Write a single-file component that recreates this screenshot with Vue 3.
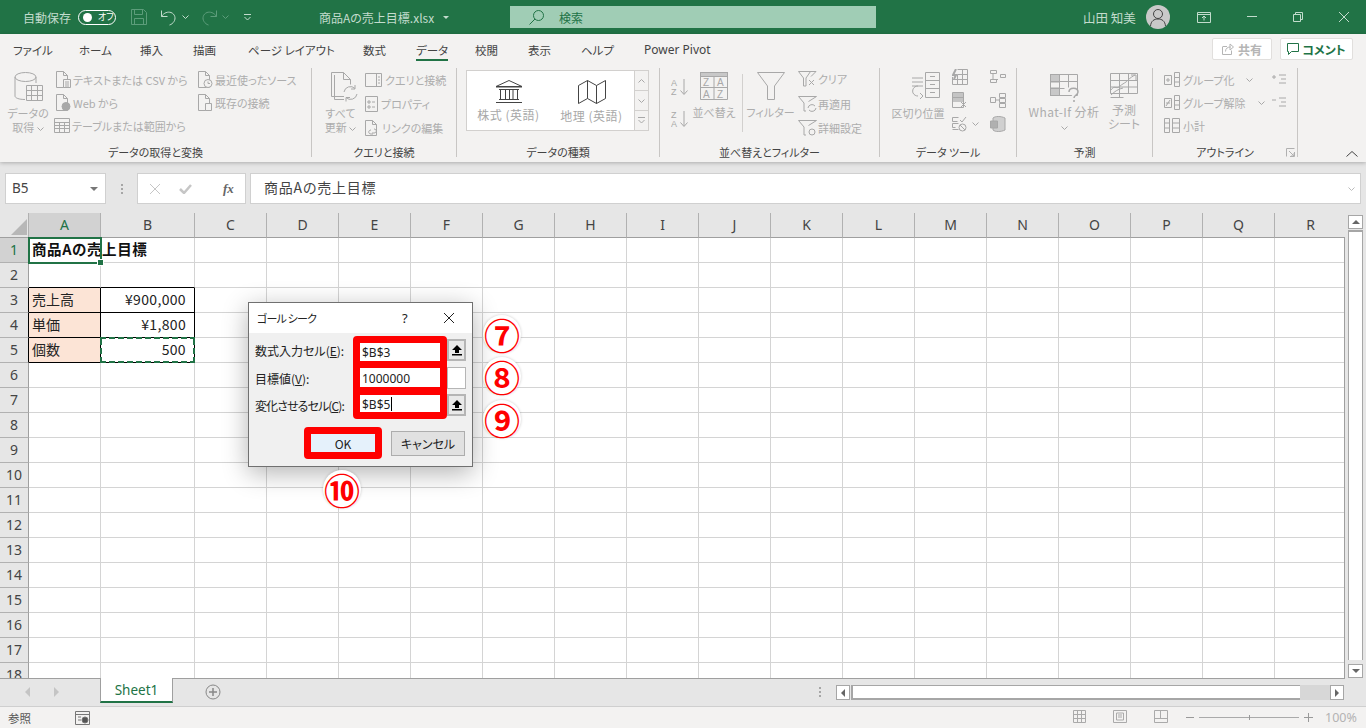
<script setup>
import { h } from 'vue'

const icons = {
  save: [16, 16, '<path d="M.5.5h12l3 3v12H.5zM3.500.5v5h8v-5M3.500 15.500v-6h9v6"/>'],
  undo: [17, 17, '<path d="M1.500 1.500v6h6M1.500 7.500C4 3.500 8 2.500 11 3.500c4 1.500 5 6 3 9-1 1.500-2.500 3-4.500 3.500"/>'],
  redo: [17, 17, '<path d="M15.500 1.500v6h-6M15.500 7.500C13 3.500 9 2.500 6 3.500c-4 1.500-5 6-3 9 1 1.500 2.500 3 4.500 3.500"/>'],
  chev: [7, 4, '<path d="M.5.5l3 3 3-3"/>'],
  qat: [7, 7, '<path d="M0 .5h7M.5 3l3 3 3-3"/>'],
  search: [15, 15, '<circle cx="9.500" cy="5.500" r="5"/><path d="M6 9l-5.500 5.500"/>'],
  user: [24, 24, '<circle cx="12" cy="9" r="4.500"/><path d="M4.500 21c.5-5 3.500-7 7.500-7s7 2 7.500 7"/>'],
  present: [14, 11, '<path d="M.5.5h13v10H.5zM.5 2.500h13M7 8.500v-4M5 6l2-2 2 2"/>'],
  min: [10, 2, '<path d="M0 .5h10"/>'],
  restore: [10, 10, '<path d="M.5 2.500h7v7h-7zM2.500 2.500v-2h7v7h-2"/>'],
  close: [10, 10, '<path d="M0 0l10 10M10 0L0 10"/>'],
  share: [12, 12, '<path d="M1 3.500h4M.5 3.500v8h9v-4M3.500 8.500c0-3 2-4.500 5-4.500M8 1l3.500 3L8 7z"/>'],
  comment: [12, 12, '<path d="M.5.5h11v8H4.500l-3 3v-3h-1z"/>'],
  db: [29, 29, '<ellipse cx="11.500" cy="5" rx="10.500" ry="4.500"/><path d="M1 5v19c0 2 4 3.500 10 3.500M22 5v6"/><path d="M12.500 13.500h16v15h-16zM12.500 18.500h16M12.500 23.500h16M17.500 13.500v15M23.500 13.500v15"/>'],
  docl: [15, 17, '<path d="M.5.5h7l4 4v12h-11zM7.500.5v4h4"/><path d="M7.500 8.500h7v8h-7zM9 11h4M9 13h4M9 15h4" fill="#f3f2f1"/>'],
  docw: [15, 17, '<path d="M.5.5h7l4 4v12h-11zM7.500.5v4h4"/><circle cx="10" cy="12.500" r="4" fill="#a8a8a8"/>'],
  table: [16, 15, '<path d="M.5.5h15v14H.5zM.5 4.500h15M.5 7.500h15M.5 10.500h15M5.500 4.500v10M10.500 4.500v10"/>'],
  docc: [15, 17, '<path d="M.5.5h7l4 4v12h-11zM7.500.5v4h4"/><circle cx="10" cy="12.500" r="4" fill="#f3f2f1"/><path d="M10 10.500v2h2"/>'],
  docb: [15, 17, '<path d="M.5.5h7l4 4v12h-11zM7.500.5v4h4"/><path d="M7.500 9.500h6v7h-6z" fill="#f3f2f1"/>'],
  refresh: [28, 30, '<path d="M14 24.500H1.500V.5h12l7 7v5M13.500.5v7h7"/><path d="M4.500 3v24.500H14"/><path d="M14 20a6.500 6.500 0 0 1 11-3.500M27 22a6.500 6.500 0 0 1-11 3.500M25 13v4h-4M16 29.500v-4h4"/>'],
  qpanel: [17, 14, '<path d="M.5.5h16v13H.5zM11.500.5v13M13 4h2M13 7h2M13 10h2"/>'],
  prop: [13, 16, '<path d="M.5.5h12v15H.5zM3 5h2v2H3zM7 6h3M3 10h2v2H3zM7 11h3"/>'],
  link: [14, 16, '<path d="M.5.5h7l4 4v11h-11zM7.500.500v4h4"/><path d="M6 10c-3 0-3 4 0 4h2M9 9c3 0 3 4 0 4H7"/>'],
  bank: [28, 23, '<path d="M14 .5L27 6.500H1zM1 7h26M3 22.500h22M1 22.500h26M4 9.500h20M4 19.500h20M5.500 9.500v10M10.500 9.500v10M14.500 9.500v10M18 9.500v10M22.500 9.500v10"/>'],
  map: [28, 24, '<path d="M.5 5.500l9-5 9 5 9-5v18l-9 5-9-5-9 5zM9.500.5v18M18.500 5.500v18"/>'],
  az: [17, 18, '<text x="0" y="8" font-size="9" fill="#a8a8a8" stroke="none" font-family="Liberation Sans">A</text><text x="0" y="17" font-size="9" fill="#a8a8a8" stroke="none" font-family="Liberation Sans">Z</text><path d="M13 1v15M9.500 12.500l3.500 4 3.500-4"/>'],
  za: [17, 18, '<text x="0" y="8" font-size="9" fill="#a8a8a8" stroke="none" font-family="Liberation Sans">Z</text><text x="0" y="17" font-size="9" fill="#a8a8a8" stroke="none" font-family="Liberation Sans">A</text><path d="M13 1v15M9.500 12.500l3.500 4 3.500-4"/>'],
  sort: [28, 28, '<rect x=".5" y=".5" width="27" height="4" fill="#c8c8c8"/><path d="M.5.5h27v27H.5zM14 4.500v23M.5 15.500h27"/><text x="3" y="14" font-size="10" fill="#a8a8a8" stroke="none" font-family="Liberation Sans">Z</text><text x="17" y="14" font-size="10" fill="#a8a8a8" stroke="none" font-family="Liberation Sans">A</text><text x="3" y="26" font-size="10" fill="#a8a8a8" stroke="none" font-family="Liberation Sans">A</text><text x="17" y="26" font-size="10" fill="#a8a8a8" stroke="none" font-family="Liberation Sans">Z</text>'],
  filter: [28, 28, '<path d="M.5.5h27L17.500 14v13.500h-7V14z"/>'],
  fclr: [20, 16, '<path d="M.5.5h12L8 7v8H5.500V7z"/><path d="M11 9l5 5M16 9l-5 5M12 .5h6l-5 5"/>'],
  fre: [20, 16, '<path d="M.5.5h18l-8 5M.5.5L6 7v8h2"/><path d="M10 12a4 4 0 0 1 7-2M18 12a4 4 0 0 1-7 2"/>'],
  fadv: [20, 16, '<path d="M.5.5h18l-8 5M.5.5L6 7v8h2"/><circle cx="14" cy="12" r="3"/>'],
  split: [29, 29, '<path d="M14.500 .5h14v25h-14zM14.500 8.500h14M14.500 16.500h14M19 4.500h5M19 12.500h5M19 20.500h5"/><path d="M1 6h11M1 10h11M1 14h11M7 14c-5 0-6 5-5 7s3 3 5 3M9 21l3 3-3 3"/>'],
  flash: [16, 16, '<path d="M5.500.5h10v15H.5V8M10.500.5v15M5.500 5.500h10M.5 10.500h15M5.500 5.500v10"/><path d="M4 0L1 6h3L2 10" stroke-width="2"/>'],
  dup: [15, 16, '<path d="M.5.5h11v15H.5zM.5 5.500h11"/><rect x="1" y="1" width="10" height="4" fill="#c4c4c4" stroke="none"/><rect x="1" y="6" width="10" height="4" fill="#c4c4c4" stroke="none"/><path d="M9 10l5 5M14 10l-5 5" fill="none"/>'],
  valid: [15, 16, '<path d="M.5 1.500h6M.5 7.500h6M.5 13.500h6M.5 1.500v4h5M.5 7.500v4h3"/><path d="M8 4l2 2 4-5"/><circle cx="10.500" cy="11.500" r="3.500"/><path d="M8 9l5 5"/>'],
  cons: [16, 13, '<path d="M.5.5h6v3h-6zM.5 9.500h6v3h-6zM3 3.500v6h5M10.500 4.500h5v3h-5z"/>'],
  rel: [16, 15, '<path d="M.5 4.500h5v5h-5zM9.500.5h6v4h-6zM9.500 5.500h6v4h-6zM9.500 10.500h6v4h-6zM5.500 7h4"/>'],
  pivot: [16, 16, '<path d="M3 2c2-2 8-2 12 0v12c-4 2-10 2-12 0z" fill="#d0d0d0"/><path d="M.5 5h7v7h-7z" fill="#b0b0b0"/>'],
  whatif: [30, 28, '<rect x=".5" y=".5" width="9" height="7.500" fill="#c8c8c8"/><rect x=".5" y="14" width="9" height="7.500" fill="#c8c8c8"/><path d="M.5.5h27v21H.5zM.5 7.500h27M.5 14.500h14M9.500.5v21M18.500.5v13"/><path d="M19 18c0-5 9-5 9 0 0 3-4 3-4 6M24 26v2" stroke-width="1.500" fill="#f3f2f1"/>'],
  fore: [28, 25, '<path d="M.5.5h27v20H.5zM.5 7.500h27M.5 14h27M9.500.5v24M18.500.5v20M.5 24.500h13"/><path d="M1 17c3-5 5-1 8-3 4-4 7-4 9-7 2-2 5-4 7-5M21 2h5v5"/><path d="M1 22c3-3 7-6 12-7"/>'],
  grp: [16, 15, '<path d="M10.500.5h5v14h-5zM10.500 5.500h5M10.500 10h5M.5 3.500h7v9h-7zM2 8h4M4 6v4"/>'],
  ungrp: [16, 15, '<path d="M10.500.5h5v14h-5zM10.500 5.500h5M10.500 10h5M.5 3.500h7v9h-7zM2 8h4M2 11l4-6"/>'],
  sub: [16, 15, '<path d="M.5.5h5v14h-5zM.5 5h5M.5 10h5M8.500.5h7v14h-7zM8.500 5h7M8.500 10h7"/>'],
  plus: [15, 11, '<path d="M0 3h4M2 1v4M7 1h7M9 5h5M7 9h7"/>'],
  minus: [15, 11, '<path d="M0 3h4M7 1h7M9 5h5M7 9h7"/>'],
  launch: [9, 9, '<path d="M.5 8.500v-8h8M8.500 4v4.500H4M3 3l5 5M8 5v3H5"/>'],
  up: [12, 6, '<path d="M.5 5.500l5.500-5 5.500 5"/>'],
  x: [10, 10, '<path d="M0 0l10 10M10 0L0 10"/>'],
  check: [13, 10, '<path d="M1 5l4 4 7-8" stroke-width="2.500"/>'],
  plusc: [16, 16, '<circle cx="8" cy="8" r="7"/><path d="M8 4v8M4 8h8" stroke-width="1.500"/>'],
  macro: [15, 14, '<path d="M.5.5h14v13H.5zM.5 3.500h14M3 6h3M3 9h3"/><circle cx="10" cy="9" r="3" fill="#555"/>'],
  vnorm: [13, 13, '<path d="M.5.5h12v12H.5zM.5 4.500h12M.5 8.500h12M4.500.5v12M8.500.5v12"/>'],
  vpage: [14, 13, '<path d="M.5.5h13v12H.5zM3.500 3h7v7h-7zM5 5h4M5 7h4"/>'],
  vbrk: [14, 13, '<path d="M.5.5h13v12H.5zM.5 8.500h13M6.500.5v8"/>']
}

const Ic = (props) => {
  const [w, v, body] = icons[props.n]
  return h('svg', {
    class: 'ic', width: w, height: v, viewBox: `0 0 ${w} ${v}`,
    fill: 'none', stroke: 'currentColor', 'stroke-width': 1, innerHTML: body
  })
}
Ic.props = ['n']

const tabs = ['ファイル', 'ホーム', '挿入', '描画', 'ページ レイアウト', '数式', 'データ', '校閲', '表示', 'ヘルプ', 'Power Pivot']
const cols = ['A', 'B', 'C', 'D', 'E', 'F', 'G', 'H', 'I', 'J', 'K', 'L', 'M', 'N', 'O', 'P', 'Q', 'R']
const rows = Array.from({ length: 18 }, (_, i) => i + 1)

const data = {
  '1A': { t: '商品Aの売上目標', c: 'bold sel' },
  '2A': { c: 'bb' }, '2B': { c: 'bb' },
  '3A': { t: '売上高', c: 'fill bb br' }, '3B': { t: '¥900,000', c: 'num bb br' },
  '4A': { t: '単価', c: 'fill bb br' }, '4B': { t: '¥1,800', c: 'num bb br' },
  '5A': { t: '個数', c: 'fill bb br' }, '5B': { t: '500', c: 'num bb br copy' }
}
const cell = (r, c) => data[r + c] || {}
</script>

<template>
  <div class="app">
    <header class="title">
      <span class="as">自動保存</span>
      <span class="toggle"><i></i><b>オフ</b></span>
      <Ic n="save" class="dim q-save" />
      <Ic n="undo" class="lt q-undo" />
      <Ic n="chev" class="lt q-c1" />
      <Ic n="redo" class="dim q-redo" />
      <Ic n="chev" class="dim q-c2" />
      <Ic n="qat" class="lt q-qat" />
      <span class="doc">商品Aの売上目標.xlsx</span>
      <span class="caret"></span>
      <div class="search"><Ic n="search" /><span>検索</span></div>
      <span class="uname">山田 知美</span>
      <span class="avatar"><Ic n="user" /></span>
      <div class="winbtns">
        <Ic n="present" /><Ic n="min" /><Ic n="restore" /><Ic n="close" />
      </div>
    </header>

    <div class="ribbon">
      <nav class="tabs">
        <div v-for="t in tabs" :key="t" class="tabcell"><span class="tab" :class="{ on: t === 'データ', en: t === 'Power Pivot' }">{{ t }}</span></div>
        <div class="tabact">
          <span class="btn-share"><Ic n="share" />共有</span>
          <span class="btn-comment"><Ic n="comment" />コメント</span>
        </div>
      </nav>
      <div class="groups">
        <section class="grp g1">
          <div class="body">
            <div class="big b-data"><Ic n="db" /><p>データの<br>取得 <Ic n="chev" /></p></div>
            <div class="col c1a">
              <div class="row"><Ic n="docl" />テキストまたは CSV から</div>
              <div class="row"><Ic n="docw" />Web から</div>
              <div class="row"><Ic n="table" />テーブルまたは範囲から</div>
            </div>
            <div class="col c1b">
              <div class="row"><Ic n="docc" />最近使ったソース</div>
              <div class="row"><Ic n="docb" />既存の接続</div>
            </div>
          </div>
          <h4>データの取得と変換</h4>
        </section>

        <section class="grp g2">
          <div class="body">
            <div class="big b-ref"><Ic n="refresh" /><p>すべて<br>更新 <Ic n="chev" /></p></div>
            <div class="col c2a">
              <div class="row"><Ic n="qpanel" />クエリと接続</div>
              <div class="row"><Ic n="prop" />プロパティ</div>
              <div class="row"><Ic n="link" />リンクの編集</div>
            </div>
          </div>
          <h4>クエリと接続</h4>
        </section>

        <section class="grp g3">
          <div class="body">
            <div class="gallery">
              <div class="gitem"><Ic n="bank" /><span>株式 (英語)</span></div>
              <div class="gitem"><Ic n="map" /><span>地理 (英語)</span></div>
            </div>
            <div class="gscroll">
              <span><Ic n="chev" class="flip" /></span>
              <span><Ic n="chev" /></span>
              <span><Ic n="qat" /></span>
            </div>
          </div>
          <h4>データの種類</h4>
        </section>

        <section class="grp g4">
          <div class="body">
            <div class="azcol"><Ic n="az" /><Ic n="za" /></div>
            <div class="big b-sort"><Ic n="sort" /><p>並べ替え</p></div>
            <i class="vsep"></i>
            <div class="big b-filter"><Ic n="filter" /><p>フィルター</p></div>
            <div class="col c4a">
              <div class="row"><Ic n="fclr" />クリア</div>
              <div class="row"><Ic n="fre" />再適用</div>
              <div class="row"><Ic n="fadv" />詳細設定</div>
            </div>
          </div>
          <h4>並べ替えとフィルター</h4>
        </section>

        <section class="grp g5">
          <div class="body">
            <div class="big b-split"><Ic n="split" /><p>区切り位置</p></div>
            <div class="col c5a">
              <div class="row"><Ic n="flash" /></div>
              <div class="row"><Ic n="dup" /></div>
              <div class="row"><Ic n="valid" /><Ic n="chev" /></div>
            </div>
            <div class="col c5b">
              <div class="row"><Ic n="cons" /></div>
              <div class="row"><Ic n="rel" /></div>
              <div class="row"><Ic n="pivot" /></div>
            </div>
          </div>
          <h4>データ ツール</h4>
        </section>

        <section class="grp g6">
          <div class="body">
            <div class="big b-what"><Ic n="whatif" /><p>What-If 分析<br><Ic n="chev" /></p></div>
            <div class="big b-fore"><Ic n="fore" /><p>予測<br>シート</p></div>
          </div>
          <h4>予測</h4>
        </section>

        <section class="grp g7">
          <div class="body">
            <div class="col c7a">
              <div class="row"><Ic n="grp" />グループ化<Ic n="chev" class="ch1" /></div>
              <div class="row"><Ic n="ungrp" />グループ解除<Ic n="chev" class="ch2" /></div>
              <div class="row"><Ic n="sub" />小計</div>
            </div>
            <div class="col c7b">
              <div class="row"><Ic n="plus" /></div>
              <div class="row"><Ic n="minus" /></div>
            </div>
          </div>
          <h4>アウトライン</h4>
          <Ic n="launch" class="launch" />
        </section>
        <Ic n="up" class="collapse" />
      </div>
    </div>

    <div class="fbar">
      <div class="namebox"><span>B5</span><i class="tri"></i></div>
      <div class="grip"><i></i><i></i><i></i></div>
      <div class="fbtns"><Ic n="x" /><Ic n="check" /><em>fx</em></div>
      <div class="finput"><span>商品Aの売上目標</span><Ic n="chev" class="fchev" /></div>
    </div>

    <main class="sheet">
      <div class="gridwrap">
        <div class="grid">
          <div class="corner"><i></i></div>
          <div v-for="c in cols" :key="c" class="ch" :class="{ act: c === 'A' }">{{ c }}</div>
          <template v-for="r in rows" :key="r">
            <div class="rh" :class="{ act: r === 1, blk: r >= 3 && r <= 5 }">{{ r }}</div>
            <div v-for="c in cols" :key="c" class="cell" :class="cell(r, c).c">{{ cell(r, c).t }}</div>
          </template>
        </div>
      </div>
      <aside class="vscroll">
        <span class="sb"><i class="tu"></i></span>
        <div class="vtrack"></div>
        <span class="sb"><i class="td"></i></span>
      </aside>

      <div class="dialog">
        <div class="dhead">
          <span>ゴール シーク</span>
          <b>?</b>
          <Ic n="close" class="dx" />
        </div>
        <div class="dbody">
          <div class="fields">
            <div class="frow">
              <label>数式入力セル(<u>E</u>):</label>
              <div class="inp">$B$3</div>
              <span class="refbtn"><svg width="12" height="12" viewBox="0 0 12 12"><path d="M6 1L1 6h3v3h4V6h3zM1 10h10v1.500H1z" fill="#000" /></svg></span>
            </div>
            <div class="frow">
              <label>目標値(<u>V</u>):</label>
              <div class="inp">1000000</div>
              <span class="refblank"></span>
            </div>
            <div class="frow">
              <label class="tight">変化させるセル(<u>C</u>):</label>
              <div class="inp caretin">$B$5</div>
              <span class="refbtn"><svg width="12" height="12" viewBox="0 0 12 12"><path d="M6 1L1 6h3v3h4V6h3zM1 10h10v1.500H1z" fill="#000" /></svg></span>
            </div>
          </div>
          <div class="dbtns">
            <button class="ok">OK</button>
            <button class="cancel">キャンセル</button>
          </div>
        </div>
      </div>
      <span class="num-mark m7">⑦</span>
      <span class="num-mark m8">⑧</span>
      <span class="num-mark m9">⑨</span>
      <span class="num-mark m10">⑩</span>
    </main>

    <div class="sheetbar">
      <div class="nav"><i class="tl"></i><i class="tr"></i></div>
      <div class="stab">Sheet1</div>
      <Ic n="plusc" class="addsheet" />
      <div class="grip hgrip"><i></i><i></i><i></i></div>
      <div class="hscroll">
        <span class="sb"><i class="tlb"></i></span>
        <div class="hthumb"></div>
        <div class="hrest"></div>
        <span class="sb"><i class="trb"></i></span>
      </div>
    </div>

    <footer class="status">
      <span class="ref">参照</span>
      <Ic n="macro" class="macro" />
      <div class="views"><Ic n="vnorm" /><Ic n="vpage" /><Ic n="vbrk" /></div>
      <div class="zoom">
        <span class="zm"></span>
        <div class="ztrack"><i></i></div>
        <span class="zp"></span>
        <em>100%</em>
      </div>
    </footer>
  </div>
</template>

<style>
html, body { margin: 0; overflow: hidden; }
</style>

<style scoped>
.app {
  width: 1366px; height: 728px; overflow: hidden; position: relative; display: flex; flex-direction: column;
  font-family: "Noto Sans CJK JP", "Noto Sans", sans-serif; font-feature-settings: "palt"; font-size: 11px;
  background: #e6e6e6; color: #444;
}
.ic { display: block; flex: none; }

/* title bar */
.title { height: 34px; flex: none; background: #217346; display: flex; align-items: center; color: #c3dccd; }
.as { margin-left: 23px; width: 49px; font-size: 12px; white-space: nowrap; }
.toggle { margin-left: 6px; width: 38px; height: 15px; border: 1px solid #fff; border-radius: 9px; box-sizing: border-box; display: flex; align-items: center; color: #fff; }
.toggle i { width: 9px; height: 9px; border-radius: 50%; background: #fff; margin-left: 4px; }
.toggle b { font-weight: 400; font-size: 9px; margin-left: 6px; line-height: 12px; }
.dim { color: #5d9d7b; }
.lt { color: #c3dccd; }
.q-save { margin-left: 15px; }
.q-undo { margin-left: 13px; }
.q-c1 { margin-left: 5px; }
.q-redo { margin-left: 12px; }
.q-c2 { margin-left: 4px; }
.q-qat { margin-left: 15px; }
.doc { margin-left: 68px; width: 118px; white-space: nowrap; font-size: 12px; }
.caret { margin-left: 6px; border: 3px solid transparent; border-top: 3px solid #c3dccd; margin-top: 3px; }
.search { margin-left: 61px; width: 366px; height: 22px; background: #a0cdb5; display: flex; align-items: center; color: #217346; font-size: 12px; }
.search .ic { margin-left: 19px; }
.search span { margin-left: 15px; }
.uname { margin-left: 207px; width: 54px; white-space: nowrap; font-size: 12.500px; }
.avatar { margin-left: 9px; width: 24px; height: 24px; border-radius: 50%; background: #c9c9c9; color: #444; }
.winbtns { margin-left: 27px; display: flex; align-items: center; color: #c3dccd; gap: 36px; }

/* ribbon */
.ribbon { height: 128px; flex: none; background: #f3f2f1; position: relative; z-index: 2; box-shadow: 0 1px 4px rgba(0,0,0,.25); }
.tabs { height: 34px; display: grid; grid-template-columns: 66px 61px 53px 55px 115px 53px 59px 53px 53px 63px auto; justify-content: start; align-items: center; padding: 0 0 2px 13px; box-sizing: border-box; position: relative; color: #444; }
.tabcell { display: flex; }
.tab { font-size: 11.500px; line-height: 16px; white-space: nowrap; position: relative; }
.tab.en { font-family: "Noto Sans", sans-serif; font-size: 12px; }
.tab.on::after { content: ""; position: absolute; left: 0; right: 0; top: 17px; height: 2px; background: #217346; }
.tabact { position: absolute; right: 13px; top: 4px; display: flex; gap: 8px; }
.btn-share, .btn-comment { height: 22px; box-sizing: border-box; border: 1px solid #e1dfdd; background: #fff; border-radius: 2px; display: flex; align-items: center; justify-content: center; font-weight: 700; font-size: 12px; white-space: nowrap; }
.btn-share { width: 60px; color: #b5b5b5; gap: 4px; }
.btn-comment { width: 73px; color: #217346; gap: 3px; }

.groups { display: flex; height: 94px; position: relative; }
.grp { height: 89px; box-sizing: border-box; border-right: 1px solid #c8c6c4; display: flex; flex-direction: column; position: relative; }
.g1 { width: 312px; } .g2 { width: 145px; } .g3 { width: 203px; } .g4 { width: 220px; }
.g5 { width: 137px; } .g6 { width: 136px; } .g7 { width: 145px; }
.body { height: 77px; display: flex; flex: none; color: #adadad; }
h4 { margin: 0; font-weight: 400; font-size: 11px; line-height: 14px; text-align: center; color: #444; white-space: nowrap; }
.big { display: flex; flex-direction: column; align-items: center; flex: none; }
.big p { margin: 0; text-align: center; line-height: 14px; white-space: nowrap; }
.big p .ic { display: inline-block; vertical-align: middle; }
.col { flex: none; display: flex; flex-direction: column; }
.row { display: flex; align-items: center; white-space: nowrap; height: 23px; gap: 2px; position: relative; }
.body .ic { color: #a8a8a8; }

.b-data { margin-left: 8px; width: 40px; padding-top: 4px; }
.b-data .ic:first-child { margin-bottom: 5px; }
.c1a { margin-left: 8px; width: 142px; }
.c1a .row:nth-child(3) { margin-left: -2px; }

.b-ref { margin-left: 11px; width: 35px; padding-top: 4px; }
.b-ref .ic:first-child { margin-bottom: 4px; margin-left: 6px; }
.c2a { margin-left: 7px; }
.c2a .row { height: 24px; gap: 3px; }

.g3 .body { padding: 2px 0 0 9px; box-sizing: border-box; }
.gallery { width: 169px; height: 61px; box-sizing: border-box; background: #fff; border: 1px solid #d2d0ce; display: flex; }
.gitem { width: 83px; display: flex; flex-direction: column; align-items: center; padding-top: 9px; box-sizing: border-box; white-space: nowrap; color: #a8a8a8; font-size: 12px; letter-spacing: .5px; line-height: 16px; }
.gitem .ic { color: #444; margin-bottom: 4px; }
.gscroll { width: 14px; height: 61px; display: flex; flex-direction: column; }
.gscroll span { flex: 1; border: 1px solid #d2d0ce; border-left: 0; display: flex; align-items: center; justify-content: center; }
.gscroll span + span { border-top: 0; }
.flip { transform: scaleY(-1); }

.azcol { margin-left: 11px; padding-top: 10px; display: flex; flex-direction: column; gap: 14px; width: 17px; }
.b-sort { margin-left: 4px; width: 44px; padding-top: 4px; }
.b-sort .ic:first-child { margin-bottom: 5px; }
.vsep { width: 1px; height: 58px; background: #d2d0ce; margin: 6px 0 0 6px; }
.b-filter { margin-left: 6px; width: 43px; padding-top: 4px; }
.b-filter .ic:first-child { margin-bottom: 5px; }
.c4a { margin: -1px 0 0 6px; }
.c4a .row { height: 24.500px; gap: 0; }

.b-split { margin-left: 10px; width: 56px; padding-top: 4px; }
.b-split .ic:first-child { margin-bottom: 5px; margin-left: 15px; }
.c5a { margin: -3px 0 0 6px; width: 38px; }
.c5b { margin-top: -3px; }
.c5a .row, .c5b .row { height: 23.500px; gap: 5px; }

.b-what { margin-left: 10px; width: 74px; padding-top: 6px; font-size: 12px; letter-spacing: .4px; }
.b-what .ic:first-child { margin-bottom: 3px; margin-left: 2px; }
.b-fore { margin-left: 9px; width: 28px; padding-top: 5px; font-size: 12px; }
.b-fore .ic:first-child { margin-bottom: 5px; }

.c7a { margin-left: 11px; width: 108px; }
.c7a .row { gap: 3px; }
.ch1 { margin-left: 8px; }
.ch2 { margin-left: 9px; }
.c7b .row { height: 23px; }
.launch { position: absolute; right: 2px; bottom: 0; color: #b0b0b0; }
.collapse { position: absolute; left: 1346px; top: 83px; color: #444; }

/* formula bar */
.fbar { height: 51px; flex: none; display: flex; padding: 11px 5px 9px; box-sizing: border-box; align-items: stretch; }
.namebox, .fbtns, .finput { background: #fff; border: 1px solid #d0d0d0; box-sizing: border-box; }
.namebox { width: 101px; display: flex; align-items: center; justify-content: space-between; padding: 0 7px 0 6px; font-family: "Noto Sans", sans-serif; font-size: 13.500px; }
.namebox span { line-height: 16px; margin-top: -1px; }
.tri { border: 4px solid transparent; border-top: 4px solid #777; border-bottom: 0; }
.grip { width: 31px; display: flex; flex-direction: column; align-items: center; justify-content: center; gap: 2px; }
.grip i { width: 2px; height: 2px; background: #a6a6a6; }
.fbtns { width: 109px; display: flex; align-items: center; color: #c6c6c6; padding-left: 12px; }
.fbtns .ic:nth-child(2) { margin-left: 19px; }
.fbtns em { color: #666; font-family: "Liberation Serif", serif; font-weight: 700; font-size: 13px; margin-left: 31px; }
.finput { margin-left: 4px; flex: 1; display: flex; align-items: center; padding: 0 5px 0 13px; justify-content: space-between; font-size: 14px; color: #444; }
.finput span { letter-spacing: .8px; line-height: 18px; margin-top: -4px; }
.fchev { color: #bbb; }

/* sheet */
.sheet { height: 465px; flex: none; display: flex; position: relative; }
.gridwrap { width: 1345px; height: 465px; overflow: hidden; flex: none; background: #fff; border-right: 0; position: relative; }
.gridwrap::after { content: ""; position: absolute; right: 0; top: 24px; bottom: 0; width: 1px; background: #9f9f9f; }
.grid { display: grid; grid-template-columns: 29px 72px 94px repeat(16, 72px); grid-auto-rows: 25px; }
.corner { background: #e6e6e6; border-bottom: 1px solid #9f9f9f; border-right: 1px solid #b1b1b1; position: relative; display: flex; align-items: flex-end; justify-content: flex-end; box-sizing: border-box; }
.corner i { width: 0; height: 0; border-style: solid; border-width: 0 0 16px 16px; border-color: transparent transparent #b7b7b7 transparent; margin: 0 1px 2px 0; }
.ch { background: #e6e6e6; border-right: 1px solid #b1b1b1; border-bottom: 1px solid #9f9f9f; box-sizing: border-box; text-align: center; line-height: 24px; font-family: "Noto Sans", sans-serif; font-size: 14px; color: #444; }
.ch.act { background: #d2d2d2; color: #217346; }
.rh { background: #e6e6e6; border-right: 1px solid #9f9f9f; border-bottom: 1px solid #b1b1b1; box-sizing: border-box; text-align: center; line-height: 24px; font-family: "Noto Sans", sans-serif; font-size: 14px; color: #444; }
.rh.act { background: #d2d2d2; color: #217346; }
.rh.blk { border-right-color: #000; }
.cell { border-right: 1px solid #d4d4d4; border-bottom: 1px solid #d4d4d4; box-sizing: border-box; background: #fff; position: relative; white-space: nowrap; font-size: 14px; line-height: 23px; padding: 0 3px; color: #222; }
.bold { font-weight: 700; color: #111; font-size: 14.500px; letter-spacing: .6px; line-height: 22px; }
.fill { background: #fce4d6; }
.num { text-align: right; padding-right: 8px; letter-spacing: .35px; }
.bb { border-bottom-color: #000; }
.br { border-right-color: #000; }
.sel { z-index: 1; }
.sel::before { content: ""; position: absolute; left: -1px; top: -1px; width: 70px; height: 23px; border: 2px solid #217346; }
.sel::after { content: ""; position: absolute; left: 68px; top: 21px; width: 5px; height: 5px; background: #217346; border: 1px solid #fff; }
.copy::after {
  content: ""; position: absolute; inset: -1px;
  background:
    repeating-linear-gradient(90deg, #217346 0 6px, transparent 6px 9px) top / 100% 2px no-repeat,
    repeating-linear-gradient(90deg, #217346 0 6px, transparent 6px 9px) bottom / 100% 2px no-repeat,
    repeating-linear-gradient(0deg, #217346 0 6px, transparent 6px 9px) left / 2px 100% no-repeat,
    repeating-linear-gradient(0deg, #217346 0 6px, transparent 6px 9px) right / 2px 100% no-repeat;
}

.vscroll { width: 21px; display: flex; flex-direction: column; padding: 2px 3px 0 3px; box-sizing: border-box; height: 465px; align-items: flex-start; }
.sb { flex: none; width: 13px; height: 12px; background: #fff; border: 1px solid #a6a6a6; display: flex; align-items: center; justify-content: center; box-sizing: content-box; }
.vtrack { height: 428px; flex: none; background: #fff; border: 1px solid #a6a6a6; border-width: 2px 1px 0; margin: 1px 0 4px; width: 13px; box-sizing: content-box; }
.tu { border: 4px solid transparent; border-bottom: 4px solid #666; border-top: 0; }
.td { border: 4px solid transparent; border-top: 4px solid #666; border-bottom: 0; }
.tlb { border: 4px solid transparent; border-right: 4px solid #666; border-left: 0; }
.trb { border: 4px solid transparent; border-left: 4px solid #666; border-right: 0; }

/* dialog */
.dialog { position: absolute; left: 248px; top: 89px; width: 225px; height: 165px; box-sizing: border-box; border: 1px solid #707070; background: #f0f0f0; box-shadow: 0 6px 24px rgba(0,0,0,.3); z-index: 3; color: #222; display: flex; flex-direction: column; }
.dhead { height: 30px; flex: none; background: #fff; display: flex; align-items: center; padding-left: 8px; font-size: 11px; position: relative; }
.dhead span { width: 145px; letter-spacing: -.8px; white-space: nowrap; }
.dhead b { font-weight: 400; font-size: 13px; width: 42px; font-family: "Noto Sans", sans-serif; }
.dx { color: #222; }
.dbody { flex: 1; position: relative; }
.fields { margin: 3px 0 0 6px; display: flex; flex-direction: column; }
.frow { display: flex; align-items: center; position: relative; }
.frow label { width: 98px; flex: none; font-size: 12px; line-height: 16px; white-space: nowrap; padding-top: 2px; }
.frow label.tight { letter-spacing: -.9px; }
.inp { width: 80px; flex: none; background: #fff; border: 0 solid #f00; border-left-width: 7px; border-right-width: 7px; box-sizing: content-box; font-size: 12px; text-indent: 2px; font-family: "Noto Sans", sans-serif; }
.frow:nth-child(1) .inp { border-top-width: 7px; border-bottom-width: 3px; height: 18px; line-height: 20px; border-radius: 4px 4px 0 0; }
.frow:nth-child(2) .inp { border-top-width: 4px; border-bottom-width: 4px; height: 19px; line-height: 21px; }
.frow:nth-child(3) .inp { border-top-width: 4px; border-bottom-width: 7px; height: 17px; line-height: 19px; border-radius: 0 0 4px 4px; }
.caretin::after { content: ""; display: inline-block; width: 1px; height: 14px; background: #000; vertical-align: -2px; margin-left: 1px; }
.refbtn, .refblank { width: 19px; height: 22px; box-sizing: border-box; flex: none; display: flex; align-items: center; justify-content: center; }
.refbtn { border: 2px solid #b5b5b5; background: #e9e9e9; }
.refblank { background: #fff; border: 1px solid #b5b5b5; }
.dbtns { position: absolute; left: 55px; top: 94px; display: flex; align-items: center; gap: 9px; }
.dbtns button { font-family: inherit; font-feature-settings: inherit; font-size: 12px; color: #222; padding: 0; box-sizing: border-box; }
.ok { width: 78px; height: 32px; border: 7px solid #f00; background: #e5f1fb; border-radius: 4px; }
.cancel { width: 74px; height: 25px; border: 1px solid #adadad; background: #e1e1e1; }

.num-mark { position: absolute; z-index: 4; width: 38px; height: 38px; border-radius: 50%; background: #fff; box-shadow: 0 0 3px rgba(0,0,0,.2); color: #f00; font-weight: 700; font-size: 36px; line-height: 38px; text-align: center; font-family: "Noto Sans CJK JP", sans-serif; font-feature-settings: normal; }
.m7 { left: 483px; top: 102px; }
.m8 { left: 483px; top: 144px; }
.m9 { left: 483px; top: 187px; }
.m10 { left: 323px; top: 257px; }

/* sheet bar */
.sheetbar { height: 28px; flex: none; box-sizing: border-box; background: #e6e6e6; display: flex; position: relative; padding-top: 1px; }
.sheetbar::before { content: ""; position: absolute; left: 0; top: 0; width: 1345px; height: 1px; background: #9f9f9f; }
.nav { width: 100px; display: flex; align-items: center; padding: 0 0 2px 25px; gap: 24px; box-sizing: border-box; flex: none; }
.tl { border: 5px solid transparent; border-right: 5px solid #c4c4c4; border-left: 0; }
.tr { border: 5px solid transparent; border-left: 5px solid #c4c4c4; border-right: 0; }
.stab { width: 73px; height: 25px; margin-top: -1px; box-sizing: border-box; background: #fff; border: 1px solid #9f9f9f; border-top: 0; border-bottom: 2px solid #217346; text-align: center; color: #217346; font-family: "Noto Sans", sans-serif; font-size: 13.500px; line-height: 25px; flex: none; position: relative; }
.addsheet { margin: 5px 0 0 32px; color: #888; }
.hgrip { position: absolute; left: 804px; top: 7px; height: 13px; }
.hscroll { position: absolute; left: 836px; top: 7px; width: 509px; height: 15px; display: flex; }
.hscroll .sb { height: 13px; width: 12px; }
.hthumb { width: 449px; box-sizing: border-box; background: #fff; border: 1px solid #a6a6a6; border-width: 1px 0 2px; margin-left: 1px; border-left: 2px solid #a6a6a6; }
.hrest { width: 30px; background: #d7d7d7; height: 15px; }

/* status */
.status { height: 22px; flex: none; background: #f3f2f1; border-top: 1px solid #cfcfcf; box-sizing: border-box; display: flex; align-items: center; position: relative; color: #555; }
.ref { margin-left: 8px; width: 67px; font-size: 11.500px; }
.macro { color: #777; }
.views { position: absolute; left: 1073px; top: 3px; display: flex; gap: 27px; color: #aaa; }
.zoom { position: absolute; left: 1186px; top: 0; height: 21px; display: flex; align-items: center; color: #aaa; }
.zm { width: 8px; height: 1px; background: #999; }
.ztrack { margin-left: 5px; width: 100px; height: 1px; background: #aaa; position: relative; }
.ztrack i { position: absolute; left: 50px; top: -2px; width: 1px; height: 5px; background: #999; }
.zp { margin-left: 5px; width: 9px; height: 9px; background: linear-gradient(#999,#999) center/100% 1px no-repeat, linear-gradient(#999,#999) center/1px 100% no-repeat; }
.zoom em { font-style: normal; font-family: "Noto Sans", sans-serif; font-size: 12.500px; margin-left: 12px; color: #b3b3b3; }
</style>
